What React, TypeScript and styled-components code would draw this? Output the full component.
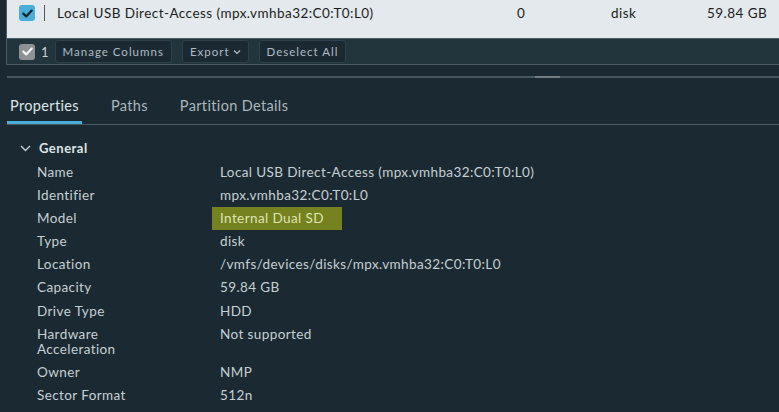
import React from 'react'
import styled, { createGlobalStyle } from 'styled-components'

const GlobalStyle = createGlobalStyle`
  html, body {
    margin: 0;
    padding: 0;
    background: #1b2a32;
    overflow: hidden;
  }
  body {
    font-family: Lato, "Noto Sans", sans-serif;
  }
`

const Page = styled.div`
  width: 779px;
  height: 412px;
  background: #1b2a32;
  padding-left: 6px;
  box-sizing: border-box;
  overflow: hidden;
`

const Grid = styled.div`
  width: 790px;
  border-left: 1px solid #485a63;
  border-bottom: 1px solid #485a63;
`

const GridRow = styled.div`
  height: 39px;
  background: #e3e9ec;
  display: flex;
  align-items: flex-start;
  padding-top: 5px;
  box-sizing: border-box;
  border-bottom: 1px solid #4d5e66;
  color: #1d1d1d;
  font-size: 13.5px;
  letter-spacing: 0.45px;
`

const Cell = styled.div<{ $w: number }>`
  width: ${(p) => p.$w}px;
  flex: none;
  line-height: 16px;
  white-space: nowrap;
`

const CheckCell = styled.div`
  width: 37px;
  padding-left: 12px;
  box-sizing: border-box;
  display: flex;
  flex: none;
  align-items: center;
  height: 16px;
`

const Box = styled.span<{ $tone: 'blue' | 'gray' }>`
  width: 16px;
  height: 16px;
  border-radius: 3px;
  background: ${(p) => (p.$tone === 'blue' ? '#49afd9' : '#8e9294')};
  display: inline-flex;
  align-items: center;
  justify-content: center;
  flex: none;
`

const Divider = styled.span`
  width: 1px;
  height: 16px;
  background: #565656;
  margin-right: 12px;
  flex: none;
`

const Footer = styled.div`
  height: 25px;
  background: #22343c;
  display: flex;
  align-items: center;
  padding-left: 12px;
`

const Count = styled.span`
  color: #c7d1d6;
  font-size: 13px;
  margin: 0 6px 0 6px;
`

const FootButton = styled.button`
  height: 23px;
  margin-right: 10px;
  background: #1b2a32;
  border: 1px solid #2e4049;
  border-radius: 3px;
  color: #aebbc3;
  font-family: Lato, "Noto Sans", sans-serif;
  font-size: 11.5px;
  letter-spacing: 1px;
  padding: 0 7px;
  display: inline-flex;
  align-items: center;
  gap: 3px;
  cursor: pointer;
`

const Splitter = styled.div`
  margin-top: 11px;
  margin-left: 1px;
  height: 2px;
  background: #475861;
  position: relative;
`

const Handle = styled.span`
  position: absolute;
  left: 528px;
  top: 0;
  width: 25px;
  height: 2px;
  background: #737d82;
`

const Tabs = styled.div`
  margin-top: 17px;
  margin-left: 1px;
  display: flex;
  border-bottom: 1px solid #485a63;
  height: 29px;
`

const Tab = styled.div<{ $active?: boolean }>`
  padding: 0 3px;
  margin-right: 26px;
  font-size: 14.5px;
  letter-spacing: 0.35px;
  color: ${(p) => (p.$active ? '#dfe5e8' : '#aab7be')};
  line-height: 22px;
  box-sizing: border-box;
  border-bottom: 3px solid ${(p) => (p.$active ? '#49afd9' : 'transparent')};
  height: 29px;
`

const Section = styled.div`
  padding-left: 14px;
  padding-top: 13px;
`

const SectionHead = styled.div`
  display: flex;
  align-items: center;
  gap: 8px;
  color: #dfe5e8;
  font-weight: 700;
  font-size: 13px;
  height: 20px;
  letter-spacing: 0.5px;
`

const Props = styled.div`
  margin-top: 3px;
  padding-left: 17px;
  display: grid;
  grid-template-columns: 183px 1fr;
`

const Label = styled.div`
  color: #c6cfd4;
  font-size: 13.5px;
  line-height: 15.5px;
  padding: 4px 0 3.6px;
  letter-spacing: 0.4px;
`

const Value = styled.div<{ $mark?: boolean }>`
  color: ${(p) => (p.$mark ? '#dde4b0' : '#c6cfd4')};
  font-size: 13.5px;
  line-height: 15.5px;
  letter-spacing: 0.4px;
  padding: 4px 0 3.6px;
  position: relative;
  z-index: 0;
  ${(p) =>
    p.$mark &&
    `
    &::before {
      content: '';
      position: absolute;
      left: -8px;
      top: 0;
      width: 130px;
      height: 23px;
      background: #76811f;
      z-index: -1;
    }
  `}
`

const Check = ({ color }: { color: string }) => (
  <svg width="11" height="9" viewBox="0 0 11 9">
    <path d="M1.3 4.6 L4.2 7.4 L9.7 1.6" stroke={color} strokeWidth="2.2" fill="none" strokeLinecap="round" strokeLinejoin="round" />
  </svg>
)

const rows: [string, string][] = [
  ['Name', 'Local USB Direct-Access (mpx.vmhba32:C0:T0:L0)'],
  ['Identifier', 'mpx.vmhba32:C0:T0:L0'],
  ['Model', 'Internal Dual SD'],
  ['Type', 'disk'],
  ['Location', '/vmfs/devices/disks/mpx.vmhba32:C0:T0:L0'],
  ['Capacity', '59.84 GB'],
  ['Drive Type', 'HDD'],
  ['Hardware Acceleration', 'Not supported'],
  ['Owner', 'NMP'],
  ['Sector Format', '512n'],
]

export default function App() {
  return (
    <Page>
      <GlobalStyle />
      <Grid>
        <GridRow>
          <CheckCell>
            <Box $tone="blue">
              <Check color="#15252d" />
            </Box>
          </CheckCell>
          <Divider />
          <Cell $w={460}>Local USB Direct-Access (mpx.vmhba32:C0:T0:L0)</Cell>
          <Cell $w={94}>0</Cell>
          <Cell $w={96}>disk</Cell>
          <Cell $w={100}>59.84 GB</Cell>
        </GridRow>
        <Footer>
          <Box $tone="gray">
            <Check color="#f2f2f2" />
          </Box>
          <Count>1</Count>
          <FootButton>Manage Columns</FootButton>
          <FootButton>
            Export
            <svg width="8" height="6" viewBox="0 0 8 6">
              <path d="M1 1.5 L4 4.5 L7 1.5" stroke="#aebbc3" strokeWidth="1.2" fill="none" />
            </svg>
          </FootButton>
          <FootButton>Deselect All</FootButton>
        </Footer>
      </Grid>
      <Splitter>
        <Handle />
      </Splitter>
      <Tabs>
        <Tab $active>Properties</Tab>
        <Tab>Paths</Tab>
        <Tab>Partition Details</Tab>
      </Tabs>
      <Section>
        <SectionHead>
          <svg width="11" height="7" viewBox="0 0 11 7">
            <path d="M1 1 L5.5 5.5 L10 1" stroke="#c6cfd4" strokeWidth="1.4" fill="none" />
          </svg>
          General
        </SectionHead>
        <Props>
          {rows.map(([k, v]) => (
            <React.Fragment key={k}>
              <Label>{k === 'Hardware Acceleration' ? <>Hardware<br />Acceleration</> : k}</Label>
              <Value $mark={k === 'Model'}>{v}</Value>
            </React.Fragment>
          ))}
        </Props>
      </Section>
    </Page>
  )
}
